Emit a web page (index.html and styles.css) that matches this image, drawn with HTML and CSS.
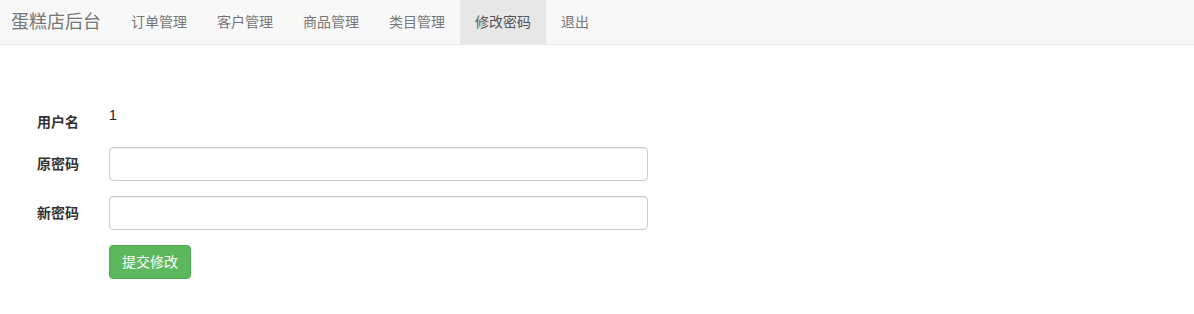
FILE: index.html
```html
<!DOCTYPE html>
<html>
<head>
    <title>蛋糕店后台 - 修改密码</title>
    <link rel="stylesheet" href="styles.css">
</head>
<body>
    <nav class="navbar">
        <a class="brand" href="#">蛋糕店后台</a>
        <ul class="nav">
            <li><a href="#">订单管理</a></li>
            <li><a href="#">客户管理</a></li>
            <li><a href="#">商品管理</a></li>
            <li><a href="#">类目管理</a></li>
            <li class="active"><a href="#">修改密码</a></li>
            <li><a href="#">退出</a></li>
        </ul>
    </nav>

    <form class="form-horizontal">
        <div class="form-group">
            <label class="control-label first">用户名</label>
            <div class="static-value">1</div>
        </div>
        <div class="form-group">
            <label class="control-label">原密码</label>
            <input type="password" class="form-control">
        </div>
        <div class="form-group">
            <label class="control-label">新密码</label>
            <input type="password" class="form-control">
        </div>
        <div class="form-group">
            <span></span>
            <div><button type="submit" class="btn-success">提交修改</button></div>
        </div>
    </form>
</body>
</html>
```

FILE: styles.css
```css
* {
    margin: 0;
    padding: 0;
    box-sizing: border-box;
}

body {
    font-family: "Liberation Sans", "Noto Sans CJK SC", sans-serif;
    font-size: 14px;
    line-height: 20px;
    color: #333;
    background: #fff;
}

a {
    text-decoration: none;
}

/* Top bar */
.navbar {
    display: flex;
    height: 45px;
    background: #f8f8f8;
    border-bottom: 1px solid #e7e7e7;
}

.brand {
    padding: 0 15px 0 11px;
    font-size: 18px;
    line-height: 44px;
    color: #777;
}

.nav {
    display: flex;
    list-style: none;
}

.nav a {
    display: block;
    padding: 0 15px;
    line-height: 44px;
    color: #777;
}

.nav .active a {
    background: #e7e7e7;
    color: #555;
}

/* Form */
.form-horizontal {
    padding: 53px 0 0 37px;
}

.form-group {
    display: grid;
    grid-template-columns: 72px 539px;
    margin-bottom: 15px;
}

.control-label {
    padding-top: 7px;
    font-weight: bold;
    color: #333;
}

.control-label.first {
    padding-top: 14px;
}

.static-value {
    min-height: 34px;
    padding-top: 7px;
    color: #222;
}

.form-control {
    height: 34px;
    padding: 6px 12px;
    border: 1px solid #ccc;
    border-radius: 4px;
    box-shadow: inset 0 1px 1px rgba(0,0,0,0.075);
    font-size: 14px;
}

.btn-success {
    padding: 6px 12px;
    font-family: inherit;
    font-size: 14px;
    line-height: 20px;
    color: #fff;
    background: #5cb85c;
    border: 1px solid #4cae4c;
    border-radius: 4px;
    cursor: pointer;
}
```
